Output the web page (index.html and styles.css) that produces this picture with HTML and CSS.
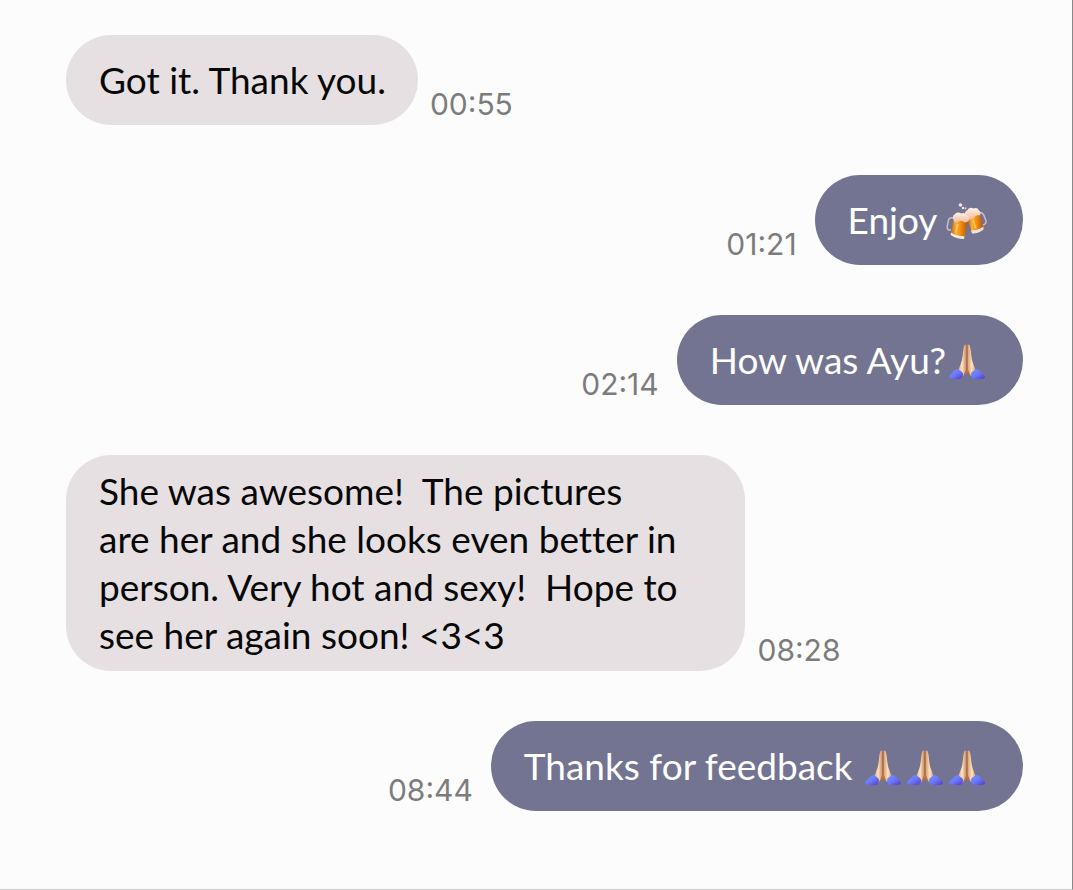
FILE: index.html
```html
<!DOCTYPE html>
<html lang="en">
<head>
  <meta charset="utf-8">
  <meta name="viewport" content="width=device-width, initial-scale=1.0">
  <title>Messages</title>
  <link rel="stylesheet" href="styles.css">
</head>
<body>
  <!-- emoji artwork, reused by the messages -->
  <svg class="sprite" aria-hidden="true">
    <defs>
      <linearGradient id="skin" x1="0" x2="1" y1="0" y2="0">
        <stop offset="0" stop-color="#d99a68"/>
        <stop offset="0.5" stop-color="#ffe3c4"/>
        <stop offset="1" stop-color="#c98655"/>
      </linearGradient>
      <linearGradient id="sleeve" x1="0" x2="1" y1="0" y2="1">
        <stop offset="0" stop-color="#6f95ff"/>
        <stop offset="0.5" stop-color="#6a78fb"/>
        <stop offset="1" stop-color="#5634c4"/>
      </linearGradient>
      <linearGradient id="beer" x1="0" x2="1" y1="0" y2="0">
        <stop offset="0" stop-color="#c9680c"/>
        <stop offset="0.3" stop-color="#fdb02e"/>
        <stop offset="0.6" stop-color="#ee8a10"/>
        <stop offset="1" stop-color="#b84e08"/>
      </linearGradient>
      <linearGradient id="foam" x1="0" x2="0" y1="0" y2="1">
        <stop offset="0" stop-color="#fff3ea"/>
        <stop offset="1" stop-color="#efb896"/>
      </linearGradient>
    </defs>
    <symbol id="pray" viewBox="0 0 42 42">
      <path fill="url(#skin)" d="M20.6 4.2Q19.400 3 18.400 4.300Q17.400 7 16.800 14Q16.200 20 14.500 23.500L11.500 31.500L17 35L20.600 30Z"/>
      <path fill="url(#skin)" d="M21.400 4.200Q22.600 3 23.600 4.300Q24.600 7 25.200 14Q25.800 20 27.500 23.500L30.500 31.500L25 35L21.400 30Z"/>
      <path fill="none" stroke="#a56b40" stroke-width="1" d="M21 4.500V29.500"/>
      <path fill="#b87345" d="M21 26L17.500 34.500L21 32L24.500 34.500Z"/>
      <path fill="url(#sleeve)" d="M12.500 28.500Q10.500 27.500 8.500 29.500L3.500 34.500Q2.300 36.500 4.500 37.500Q10 38.800 15 37.800L17.300 33.500Q16 30 12.500 28.500Z"/>
      <path fill="url(#sleeve)" d="M29.500 28.500Q31.500 27.500 33.500 29.500L38.500 34.500Q39.700 36.500 37.500 37.500Q32 38.800 27 37.800L24.700 33.500Q26 30 29.500 28.500Z"/>
    </symbol>
    <symbol id="cheers" viewBox="0 0 42 42">
      <path fill="none" stroke="#c9bcc3" stroke-width="1.500" d="M7 17Q3 16 2.300 20L1.200 25.500Q1 29.500 5 29"/>
      <path fill="none" stroke="#c9bcc3" stroke-width="1.500" d="M33.500 11.500Q36.500 11 38 14.500L40 20Q40.500 23.500 36 24"/>
      <path fill="url(#beer)" d="M21.500 16.500L33.500 12.500L37.500 26.500Q32 31.500 25.500 30.500Z"/>
      <path fill="#eee2dc" d="M25 29.500Q32 29.500 37.500 25.500V28.500Q32 33 26 32.500Z"/>
      <path fill="url(#foam)" d="M19.500 15Q17.500 11 21.500 9Q23.500 5.500 27.500 7.500Q31.500 6 33 9.500Q36 12 33.500 14.500Q30 13.500 28 16.500Q25 20 21.500 18Z"/>
      <path fill="url(#beer)" d="M8 18L22 19.500L18.500 36Q11 36.500 5 32Z"/>
      <path fill="#f4e9e3" d="M5 31.500Q11 35.500 18.500 35.200L18 38Q10 38 4.700 34Z"/>
      <path fill="url(#foam)" d="M7.500 19Q5.500 15 9 13Q12 10.500 15 12.500Q18.500 11 20.500 14Q24.500 15.500 22.500 20Q20 22.500 17 20.500Q13.500 18.500 11.500 21.500Q8 22.500 7.500 19Z"/>
      <path stroke="#ffe38a" stroke-width="1.500" opacity=".6" d="M12 23L9.500 31.500M27 19L30 27.500"/>
      <circle fill="#f7e6df" cx="14.500" cy="4" r="1.800"/>
      <circle fill="#f7e6df" cx="17" cy="7" r="1.200"/>
      <circle fill="#e9d3d0" cx="19.500" cy="7.300" r="1"/>
    </symbol>
  </svg>

  <main class="chat">
    <div class="message received">
      <p class="bubble">Got it. Thank you.</p>
      <time class="time">00:55</time>
    </div>

    <div class="message sent">
      <p class="bubble"><span>Enjoy <svg class="emoji" role="img" aria-label="Clinking beer mugs"><use href="#cheers"/></svg></span></p>
      <time class="time">01:21</time>
    </div>

    <div class="message sent">
      <p class="bubble"><span>How was Ayu?<svg class="emoji" role="img" aria-label="Folded hands"><use href="#pray"/></svg></span></p>
      <time class="time">02:14</time>
    </div>

    <div class="message received">
      <p class="bubble long">She was awesome!&nbsp; The pictures<br>are her and she looks even better in<br>person. Very hot and sexy!&nbsp; Hope to<br>see her again soon! &lt;3&lt;3</p>
      <time class="time">08:28</time>
    </div>

    <div class="message sent">
      <p class="bubble"><span>Thanks for feedback <svg class="emoji" role="img" aria-label="Folded hands"><use href="#pray"/></svg><svg class="emoji" role="img" aria-label="Folded hands"><use href="#pray"/></svg><svg class="emoji" role="img" aria-label="Folded hands"><use href="#pray"/></svg></span></p>
      <time class="time">08:44</time>
    </div>
  </main>
</body>
</html>
```
FILE: styles.css
```css
* {
  box-sizing: border-box;
}
body {
  margin: 0;
  background: #fcfcfc;
  font-family: Lato, sans-serif;
}
.sprite {
  position: absolute;
  width: 0;
  height: 0;
}
.chat {
  display: flex;
  flex-direction: column;
  gap: 50px;
  min-height: 100vh;
  padding: 35px 49px 50px 66px;
  border-right: 1px solid #888;
  border-bottom: 1px solid #ccc;
}
.message {
  display: flex;
  align-items: flex-end;
  gap: 12px;
}
.sent {
  flex-direction: row-reverse;
  gap: 18px;
}
.bubble {
  display: flex;
  align-items: center;
  min-height: 90px;
  margin: 0;
  padding: 12px 32px 12px 33px;
  border-radius: 45px;
  font-size: 37px;
  font-variant-ligatures: none;
  line-height: 48px;
}
.received .bubble {
  background: #e6e0e2;
  color: #080808;
}
.sent .bubble {
  padding-right: 35px;
  background: #737491;
  color: #fff;
}
.bubble.long {
  display: block;
  width: 71%;
}
.emoji {
  width: 42px;
  height: 42px;
  vertical-align: -9px;
}
.time {
  padding-bottom: 3px;
  color: #7c7c7c;
  font-family: Inter, sans-serif;
  font-size: 30px;
  line-height: 36px;
}
```
